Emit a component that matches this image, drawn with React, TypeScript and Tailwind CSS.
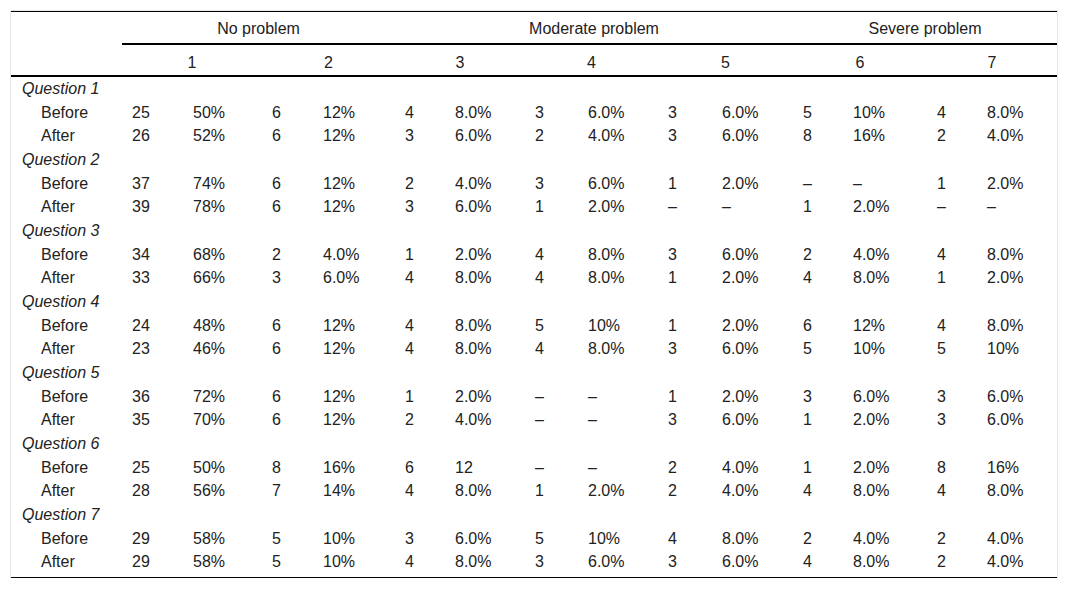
import React from 'react';

type Row = string[];

const COL_WIDTHS = [
  'w-[111px]',
  'w-[61px]', 'w-[79px]',
  'w-[51px]', 'w-[82px]',
  'w-[50px]', 'w-[80px]',
  'w-[53px]', 'w-[80px]',
  'w-[54px]', 'w-[81px]',
  'w-[50px]', 'w-[84px]',
  'w-[50px]', 'w-[80px]',
];

const QUESTIONS: { title: string; before: Row; after: Row }[] = [
  {
    title: 'Question 1',
    before: ['25', '50%', '6', '12%', '4', '8.0%', '3', '6.0%', '3', '6.0%', '5', '10%', '4', '8.0%'],
    after: ['26', '52%', '6', '12%', '3', '6.0%', '2', '4.0%', '3', '6.0%', '8', '16%', '2', '4.0%'],
  },
  {
    title: 'Question 2',
    before: ['37', '74%', '6', '12%', '2', '4.0%', '3', '6.0%', '1', '2.0%', '–', '–', '1', '2.0%'],
    after: ['39', '78%', '6', '12%', '3', '6.0%', '1', '2.0%', '–', '–', '1', '2.0%', '–', '–'],
  },
  {
    title: 'Question 3',
    before: ['34', '68%', '2', '4.0%', '1', '2.0%', '4', '8.0%', '3', '6.0%', '2', '4.0%', '4', '8.0%'],
    after: ['33', '66%', '3', '6.0%', '4', '8.0%', '4', '8.0%', '1', '2.0%', '4', '8.0%', '1', '2.0%'],
  },
  {
    title: 'Question 4',
    before: ['24', '48%', '6', '12%', '4', '8.0%', '5', '10%', '1', '2.0%', '6', '12%', '4', '8.0%'],
    after: ['23', '46%', '6', '12%', '4', '8.0%', '4', '8.0%', '3', '6.0%', '5', '10%', '5', '10%'],
  },
  {
    title: 'Question 5',
    before: ['36', '72%', '6', '12%', '1', '2.0%', '–', '–', '1', '2.0%', '3', '6.0%', '3', '6.0%'],
    after: ['35', '70%', '6', '12%', '2', '4.0%', '–', '–', '3', '6.0%', '1', '2.0%', '3', '6.0%'],
  },
  {
    title: 'Question 6',
    before: ['25', '50%', '8', '16%', '6', '12', '–', '–', '2', '4.0%', '1', '2.0%', '8', '16%'],
    after: ['28', '56%', '7', '14%', '4', '8.0%', '1', '2.0%', '2', '4.0%', '4', '8.0%', '4', '8.0%'],
  },
  {
    title: 'Question 7',
    before: ['29', '58%', '5', '10%', '3', '6.0%', '5', '10%', '4', '8.0%', '2', '4.0%', '2', '4.0%'],
    after: ['29', '58%', '5', '10%', '4', '8.0%', '3', '6.0%', '3', '6.0%', '4', '8.0%', '2', '4.0%'],
  },
];

// last row carries the closing rule plus a little breathing room above it
const DataRow = ({ label, cells, rowClass, last }: { label: string; cells: Row; rowClass: string; last?: boolean }) => {
  const cellClass = last ? 'border-b border-black pb-[4px]' : '';
  return (
    <tr className={last ? 'h-[28px]' : rowClass}>
      <td className={`pl-[30px] ${cellClass}`}>{label}</td>
      {cells.map((c, i) => (
        <td key={i} className={`pl-[10px] ${cellClass}`}>{c}</td>
      ))}
    </tr>
  );
};

export default function App() {
  return (
    <div className="bg-white w-[1069px] h-[590px] pt-[10px] pl-[10px] font-['Liberation_Sans',Arial,sans-serif] text-[16px] leading-[20px] text-[#222]">
      <div className="w-[1048px] border-x border-t border-[#e6e6e6]">
        <table className="table-fixed w-[1046px] border-separate border-spacing-0 text-left">
          <colgroup>
            {COL_WIDTHS.map((w, i) => (
              <col key={i} className={w} />
            ))}
          </colgroup>
          <thead>
            <tr className="h-[34px]">
              <th rowSpan={2} className="border-t border-b-2 border-black" />
              <th colSpan={4} className="border-t border-b-2 border-black font-normal text-center pt-[2px]">No problem</th>
              <th colSpan={6} className="border-t border-b-2 border-black font-normal text-center pt-[2px]">Moderate problem</th>
              <th colSpan={4} className="border-t border-b-2 border-black font-normal text-center pt-[2px]">Severe problem</th>
            </tr>
            <tr className="h-[32px]">
              {['1', '2', '3', '4', '5', '6', '7'].map((n) => (
                <th key={n} colSpan={2} className="border-b-2 border-black font-normal text-center pt-[5px]">{n}</th>
              ))}
            </tr>
          </thead>
          <tbody>
            {QUESTIONS.map((q, qi) => (
              <React.Fragment key={q.title}>
                <tr className="h-[24px]">
                  <td colSpan={15} className="pl-[11px] italic">{q.title}</td>
                </tr>
                <DataRow label="Before" cells={q.before} rowClass="h-[23px]" />
                <DataRow label="After" cells={q.after} rowClass="h-[24px]" last={qi === QUESTIONS.length - 1} />
              </React.Fragment>
            ))}
          </tbody>
        </table>
      </div>
    </div>
  );
}
